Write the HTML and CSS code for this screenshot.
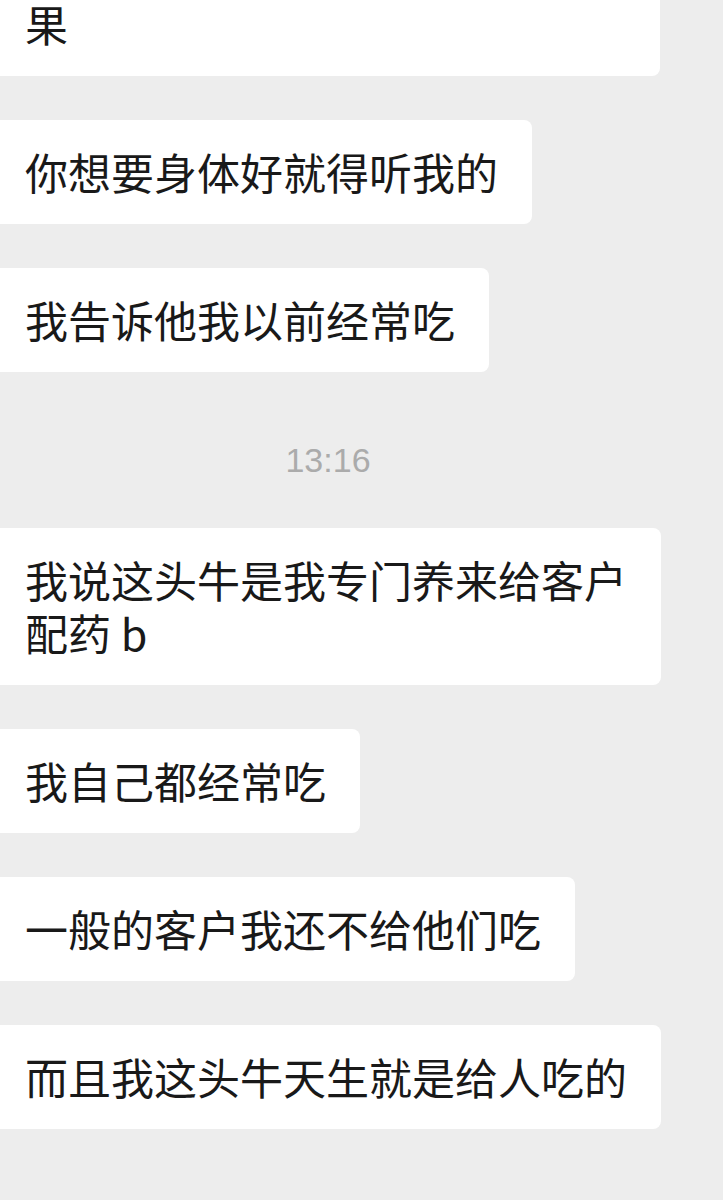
FILE: index.html
```html
<!DOCTYPE html>
<html lang="zh-CN">
<head>
  <meta charset="UTF-8">
  <meta name="viewport" content="width=device-width, initial-scale=1.0">
  <title>聊天记录</title>
  <link rel="stylesheet" href="styles.css">
</head>
<body>
  <ul class="chat">
    <li class="msg msg-first"><p class="bubble bubble-wide">果</p></li>
    <li class="msg"><p class="bubble">你想要身体好就得听我的</p></li>
    <li class="msg"><p class="bubble">我告诉他我以前经常吃</p></li>
    <li class="time">13:16</li>
    <li class="msg"><p class="bubble">我说这头牛是我专门养来给客户配药 b</p></li>
    <li class="msg"><p class="bubble">我自己都经常吃</p></li>
    <li class="msg"><p class="bubble">一般的客户我还不给他们吃</p></li>
    <li class="msg"><p class="bubble">而且我这头牛天生就是给人吃的</p></li>
  </ul>
</body>
</html>
```

FILE: styles.css
```css
*{margin:0px;padding:0px;box-sizing:border-box;}
ul, ol, li{list-style:none;}

html, body {
  background: #ededed;
  overflow: hidden;
}
body {
  font-family: "Noto Sans CJK SC", "Noto Sans", sans-serif;
  color: #191919;
}

/* 말풍선 목록 - 왼쪽이 화면 밖으로 살짝 잘려 있음 */
.chat {
  display: flex;
  flex-direction: column;
  gap: 44px;
  margin-left: -10px;
}
.msg {
  display: flex;
}
.msg-first {
  margin-top: -28px;
}
.bubble {
  background: #fff;
  border-radius: 8px;
  padding: 25px 34px 26px 35px;
  font-size: 43px;
  line-height: 53px;
  max-width: 671px;
}
.bubble-wide {
  width: 670px;
}

.time {
  font-family: "Liberation Sans", "Noto Sans", sans-serif;
  font-size: 34px;
  line-height: 40px;
  color: #ababab;
  text-align: center;
  width: 676px;
  padding: 24px 0 4px;
}
```
